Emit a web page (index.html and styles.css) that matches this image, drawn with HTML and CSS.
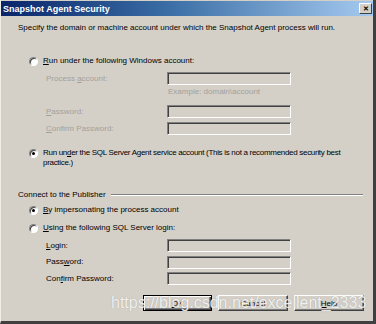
FILE: index.html
```html
<html>
    <head>
        <title>Snapshot Agent Security</title>
        <link rel="stylesheet" href="styles.css">
    </head>
    <body>
        <div class="window">
            <div class="titlebar">
                <span class="title">Snapshot Agent Security</span>
                <span class="close">&#x2715;</span>
            </div>
            <div class="content">
                <p class="intro">Specify the domain or machine account under which the Snapshot Agent process will run.</p>

                <div class="option first">
                    <span class="radio"></span>
                    <span class="label"><u>R</u>un under the following Windows account:</span>
                </div>
                <div class="fields">
                    <span class="field-label disabled">Process <u>a</u>ccount:</span>
                    <span class="box"></span>
                    <span></span>
                    <span class="hint disabled">Example: domain\account</span>
                    <span class="field-label disabled"><u>P</u>assword:</span>
                    <span class="box"></span>
                    <span class="field-label disabled"><u>C</u>onfirm Password:</span>
                    <span class="box"></span>
                </div>

                <div class="option second">
                    <span class="radio checked"></span>
                    <span class="label long">Run un<u>d</u>er the SQL Server Agent service account (This is not a recommended security best practice.)</span>
                </div>

                <div class="group">
                    <span>Connect to the Publisher</span>
                    <span class="rule"></span>
                </div>

                <div class="option third">
                    <span class="radio checked"></span>
                    <span class="label"><u>B</u>y impersonating the process account</span>
                </div>
                <div class="option fourth">
                    <span class="radio"></span>
                    <span class="label"><u>U</u>sing the following SQL Server login:</span>
                </div>
                <div class="fields login">
                    <span class="field-label"><u>L</u>ogin:</span>
                    <span class="box"></span>
                    <span class="field-label">Pass<u>w</u>ord:</span>
                    <span class="box"></span>
                    <span class="field-label">Con<u>f</u>irm Password:</span>
                    <span class="box"></span>
                </div>

                <div class="buttons">
                    <button class="default"><u>O</u>K</button>
                    <button>Cancel</button>
                    <button><u>H</u>elp</button>
                </div>
            </div>
            <div class="watermark">https://blog.csdn.net/excellent_2333</div>
        </div>
    </body>
</html>
```

FILE: styles.css
```css
body {
    margin: 0;
    background: #d4d0c8;
    font-family: "Liberation Sans", Arial, sans-serif;
    font-size: 8px;
    color: #000;
}
.window {
    position: relative;
    width: 376px;
    height: 324px;
    box-sizing: border-box;
    border-left: 1px solid #eeede8;
    border-right: 3px solid #404040;
    border-bottom: 3px solid #404040;
    overflow: hidden;
}
/* title bar with the classic blue gradient */
.titlebar {
    display: flex;
    align-items: center;
    justify-content: space-between;
    height: 15px;
    margin-top: 1px;
    padding: 0 1px 0 2px;
    background: linear-gradient(to right, #0a246a, #3a6ea5 45%, #a6caf0);
    color: #fff;
}
.title {
    font-weight: bold;
    font-size: 9px;
}
.close {
    width: 11px;
    height: 9px;
    display: flex;
    align-items: center;
    justify-content: center;
    background: #d4d0c8;
    color: #000;
    font-size: 7px;
    font-weight: bold;
    border: 1px solid;
    border-color: #fff #404040 #404040 #fff;
}
.content {
    padding: 0 9px 0 17px;
}
.intro {
    margin: 7px 0 0 0;
    line-height: 10px;
}
/* radio buttons */
.option {
    display: flex;
    align-items: flex-start;
    line-height: 10px;
    padding-left: 11px;
}
.option .label {
    margin-left: 5px;
    width: 300px;
}
.option .label.long {
    width: 312px;
    letter-spacing: -0.3px;
}
.radio {
    position: relative;
    width: 9px;
    height: 9px;
    flex: none;
    margin-top: 1px;
    box-sizing: border-box;
    border-radius: 50%;
    background: #fff;
    border: 1px solid;
    border-color: #808080 #fff #fff #808080;
    box-shadow: inset 1px 1px #404040;
}
.radio.checked::after {
    content: "";
    position: absolute;
    left: 2px;
    top: 2px;
    width: 3px;
    height: 3px;
    border-radius: 50%;
    background: #000;
}
.option.first { margin-top: 23px; }
.option.second { margin-top: 13px; }
.option.third { margin-top: 5px; }
.option.fourth { margin-top: 8px; }

/* label / input grid */
.fields {
    display: grid;
    grid-template-columns: 121px 124px;
    row-gap: 4px;
    align-items: center;
    margin: 6px 0 0 28px;
}
.fields .hint {
    margin: -2px 0 4px 1px;
    line-height: 10px;
}
.field-label {
    line-height: 10px;
}
.disabled {
    color: #a3a09a;
}
.box {
    height: 13px;
    box-sizing: border-box;
    border: 1px solid;
    border-color: #808080 #fff #fff #808080;
    box-shadow: inset 1px 1px #404040, inset -1px -1px #d4d0c8;
}
.fields.login { row-gap: 3.5px; }

.group {
    display: flex;
    align-items: center;
    margin-top: 22px;
    line-height: 10px;
}
.rule {
    flex: 1;
    margin: 0 1px 0 5px;
    border-top: 1px solid #808080;
    border-bottom: 1px solid #fff;
}
.buttons {
    display: flex;
    justify-content: flex-end;
    gap: 6px;
    margin-top: 10px;
}
button {
    width: 70px;
    height: 16px;
    padding: 0;
    font-family: inherit;
    font-size: 8px;
    background: #d4d0c8;
    border: 1px solid;
    border-color: #fff #404040 #404040 #fff;
    box-shadow: inset -1px -1px #808080;
}
button.default {
    width: 69px;
    border: 1px solid #000;
    box-shadow: inset 1px 1px #fff, inset -1px -1px #404040, inset -2px -2px #808080;
}
/* blog watermark laid over the buttons */
.watermark {
    position: absolute;
    left: 110px;
    top: 294px;
    font-size: 16px;
    color: rgba(255, 255, 255, 0.85);
    text-shadow: 0 0 1px rgba(120, 120, 120, 0.6);
}
```
